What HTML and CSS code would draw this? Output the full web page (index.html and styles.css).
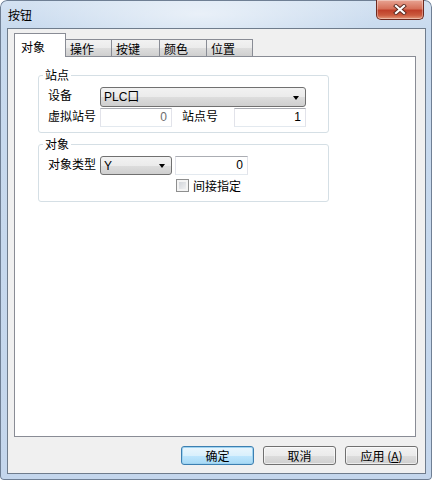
FILE: index.html
```html
<!DOCTYPE html>
<html>
<head>
<meta charset="utf-8">
<link rel="stylesheet" href="styles.css">
</head>
<body>
<div class="frame">
  <div class="titlebar">
    <span class="title">按钮</span>
    <div class="close">
      <svg width="14" height="11" viewBox="0 0 14 11">
        <path d="M3 2 L11 9 M11 2 L3 9" stroke="#5a2a20" stroke-width="4" stroke-linecap="square"/>
        <path d="M3 2 L11 9 M11 2 L3 9" stroke="#ffffff" stroke-width="2.2" stroke-linecap="square"/>
      </svg>
    </div>
  </div>
  <div class="client">
    <div class="tabs">
      <div class="tab active">对象</div>
      <div class="tab w46">操作</div>
      <div class="tab w48">按键</div>
      <div class="tab w47">颜色</div>
      <div class="tab w46">位置</div>
    </div>
    <div class="panel">
      <fieldset class="group">
        <legend>站点</legend>
        <div class="row r1">
          <span class="lbl">设备</span>
          <div class="combo wide"><span>PLC口</span><i class="arrow"></i></div>
        </div>
        <div class="row r2">
          <span class="lbl">虚拟站号</span>
          <div class="edit gray">0</div>
          <span class="lbl lbl2">站点号</span>
          <div class="edit">1</div>
        </div>
      </fieldset>
      <fieldset class="group g2">
        <legend>对象</legend>
        <div class="row r1">
          <span class="lbl">对象类型</span>
          <div class="combo small"><span>Y</span><i class="arrow"></i></div>
          <div class="edit e3">0</div>
        </div>
        <div class="row chk">
          <span class="box"></span>
          <span class="chklbl">间接指定</span>
        </div>
      </fieldset>
    </div>
    <div class="buttons">
      <div class="btn default">确定</div>
      <div class="btn">取消</div>
      <div class="btn">应用 (<u>A</u>)</div>
    </div>
  </div>
</div>
</body>
</html>
```
FILE: styles.css
```css
* { box-sizing: border-box; }
html, body { margin: 0; padding: 0; background: #ffffff; }
body {
  font-family: "Liberation Sans", "Noto Sans CJK SC", sans-serif;
  font-size: 12px;
  color: #000;
}
.frame {
  width: 432px;
  height: 480px;
  padding: 0 6px 6px 7px;
  border-radius: 7px 7px 4px 4px;
  background:
    radial-gradient(ellipse 180px 40px at 200px 14px, rgba(255,255,255,0.55), rgba(255,255,255,0) 100%),
    linear-gradient(to bottom, #d4e2f2 0px, #c8daee 30px, #c4d6ec 100%);
  box-shadow: inset 0 0 0 1px #6f7f94;
  display: flex;
  flex-direction: column;
}
.titlebar {
  height: 28px;
  display: flex;
  align-items: flex-start;
  padding-left: 1px;
}
.title {
  margin-top: 7px;
  line-height: 16px;
  font-family: "Noto Sans CJK SC", sans-serif;
  font-size: 12px;
  color: #000;
}
.close {
  margin-left: auto;
  margin-right: 2px;
  width: 48px;
  height: 20px;
  border: 1px solid #6e2a1f;
  border-top: none;
  border-radius: 0 0 5px 5px;
  background: linear-gradient(to bottom, #e8a493 0%, #d6715a 45%, #c0402a 55%, #cb5a3e 80%, #e59a7b 100%);
  box-shadow: inset 0 0 0 1px rgba(255,255,255,0.35);
  display: flex;
  align-items: center;
  justify-content: center;
}
.close svg { display: block; }
.client {
  flex: 1;
  background: #f0f0f0;
  border: 1px solid #6f7c8c;
  display: flex;
  flex-direction: column;
}
.tabs {
  margin: 4px 0 0 6px;
  height: 23px;
  display: flex;
  align-items: flex-end;
}
.tab {
  height: 17px;
  border: 1px solid #898c95;
  border-bottom: none;
  border-left: none;
  background: linear-gradient(to bottom, #f2f2f2 0%, #ebebeb 50%, #dddddd 51%, #cfcfcf 100%);
  padding: 0 0 0 4px;
  line-height: 17px;
  font-family: "Noto Sans CJK SC", sans-serif;
  font-size: 12px;
}
.tab.w46 { width: 46px; }
.tab.w47 { width: 47px; }
.tab.w48 { width: 48px; }
.tab.active {
  position: relative;
  z-index: 1;
  width: 52px;
  height: 24px;
  margin-bottom: -1px;
  background: #ffffff;
  border-left: 1px solid #898c95;
  padding: 4px 0 0 6px;
  line-height: 18px;
}
.panel {
  margin-left: 6px;
  width: 402px;
  height: 381px;
  background: #ffffff;
  border: 1px solid #898c95;
  padding: 11px 0 0 23px;
}
.group {
  margin: 0;
  width: 291px;
  border: 1px solid #d5dfe5;
  border-radius: 3px;
  padding: 0 4px 5px 4px;
}
.group legend {
  padding: 0 2px;
  line-height: 14px;
  font-family: "Noto Sans CJK SC", sans-serif;
  font-size: 12px;
}
.g2 { margin-top: 4px; padding-bottom: 9px; }
.row {
  display: flex;
  align-items: flex-start;
  margin-left: 5px;
}
.row.r1 { margin-top: 5px; }
.row.r2 { margin-top: 1px; }
.lbl {
  width: 52px;
  flex: none;
  line-height: 14px;
  padding-top: 1px;
  font-family: "Noto Sans CJK SC", sans-serif;
  font-size: 12px;
  white-space: nowrap;
}
.lbl2 { margin-left: 10px; }
.combo {
  height: 20px;
  border: 1px solid #707070;
  border-radius: 3px;
  background: linear-gradient(to bottom, #f2f2f2 0%, #ebebeb 50%, #dddddd 51%, #cfcfcf 100%);
  display: flex;
  align-items: center;
  padding: 0 6px 0 3px;
  line-height: 16px;
}
.combo span { flex: 1; }
.combo.wide { width: 206px; }
.combo.small { width: 72px; height: 19px; }
.arrow {
  width: 0;
  height: 0;
  border-left: 3.5px solid transparent;
  border-right: 3.5px solid transparent;
  border-top: 4px solid #000;
  margin-top: 1px;
}
.edit {
  width: 72px;
  height: 19px;
  border: 1px solid #e2e3ea;
  border-top-color: #abadb3;
  border-bottom-color: #e3e9ef;
  background: #fff;
  text-align: right;
  padding-right: 4px;
  line-height: 17px;
}
.edit.gray { color: #6d6d6d; }
.edit.e3 { margin-left: 3px; width: 73px; }
.row.chk {
  margin-top: 4px;
  margin-left: 133px;
  align-items: center;
  height: 13px;
}
.box {
  width: 13px;
  height: 13px;
  border: 1px solid #8e8f8f;
  background: linear-gradient(135deg, #cbcfd5 0%, #f6f6f6 100%);
  box-shadow: inset 0 0 0 2px #f4f4f4;
  flex: none;
}
.chklbl {
  margin-left: 4px;
  line-height: 13px;
  font-family: "Noto Sans CJK SC", sans-serif;
  font-size: 12px;
}
.buttons {
  margin-top: 9px;
  display: flex;
  justify-content: flex-end;
  gap: 9px;
  padding-right: 7px;
}
.btn {
  width: 73px;
  height: 19px;
  border: 1px solid #707070;
  border-radius: 3px;
  background: linear-gradient(to bottom, #f2f2f2 0%, #ebebeb 50%, #dddddd 51%, #cfcfcf 100%);
  box-shadow: inset 0 0 0 1px rgba(255,255,255,0.6);
  text-align: center;
  line-height: 17px;
  font-family: "Noto Sans CJK SC", sans-serif;
  font-size: 12px;
}
.btn.default {
  border-color: #3c7fb1;
  background: linear-gradient(to bottom, #eaf6fd 0%, #d9f0fc 50%, #bee6fd 51%, #a7d9f5 100%);
  box-shadow: inset 0 0 0 1px #9fd3f0;
}
```
